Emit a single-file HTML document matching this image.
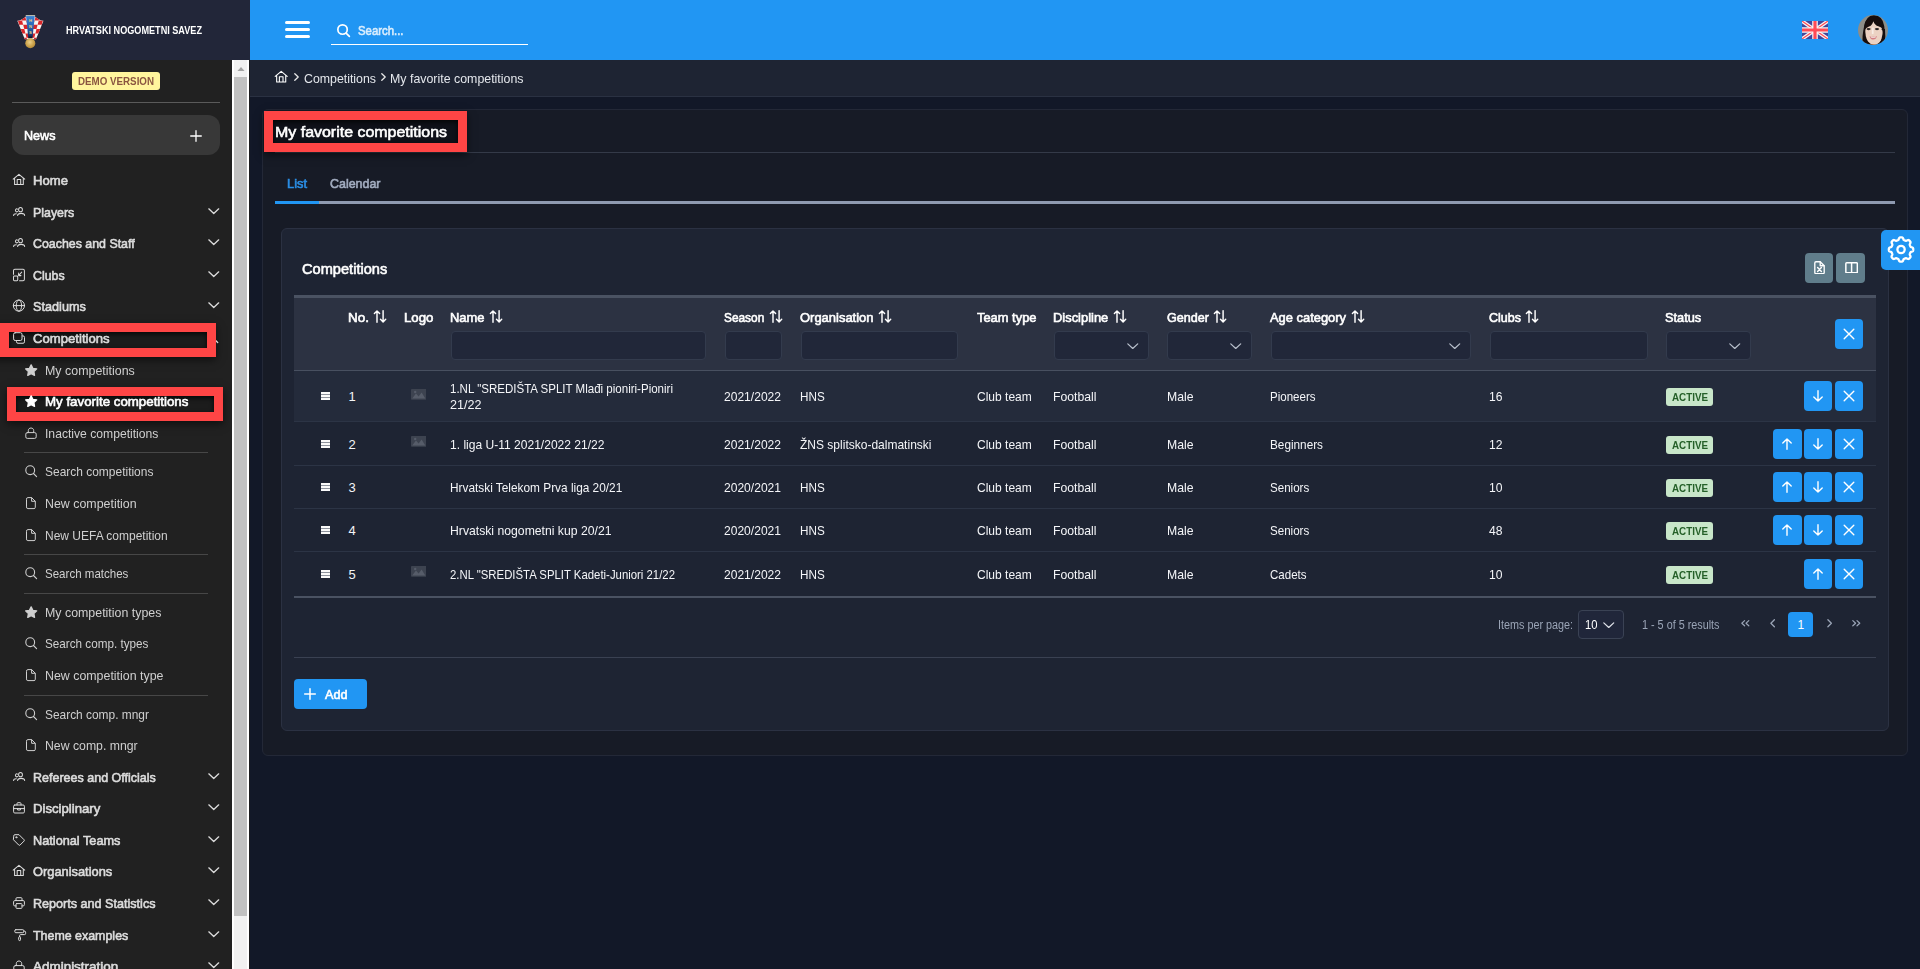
<!DOCTYPE html><html lang="en"><head><meta charset="utf-8"><title>My favorite competitions</title><style>

html,body{margin:0;padding:0;overflow:hidden;}
body{width:1920px;height:969px;overflow:hidden;background:#121828;font-family:"Liberation Sans", sans-serif;position:relative;}
body>*{position:absolute;box-sizing:border-box;}
span.t{white-space:nowrap;line-height:1;transform-origin:0 0;display:block;}

</style></head><body>
<div style="left:250px;top:0px;width:1670px;height:60px;background:#2196f3;"></div>
<div style="left:0px;top:0px;width:250px;height:60px;background:#222639;"></div>
<svg style="left:10px;top:8px;" width="42" height="46" viewBox="0 0 42 46"><defs><clipPath id="shL"><path d="M7.3 12.7 Q11.5 12.4 15.9 8.4 L16 7.3 H24.8 L24.9 8.4 Q29.3 12.4 33.5 12.7 L26 31.3 H14.8 Z"/></clipPath>
<clipPath id="hfL"><rect x="0" y="0" width="20.4" height="46"/></clipPath>
<linearGradient id="stg" x1="0" y1="0" x2="0" y2="1"><stop offset="0" stop-color="#3f86d6"/><stop offset="0.55" stop-color="#245fae"/><stop offset="0.85" stop-color="#163a73"/><stop offset="1" stop-color="#080d1c"/></linearGradient>
<radialGradient id="blg" cx="0.45" cy="0.4" r="0.6"><stop offset="0" stop-color="#ecd08a"/><stop offset="0.6" stop-color="#cfa650"/><stop offset="1" stop-color="#b58a38"/></radialGradient>
<filter id="sb" x="-10%" y="-10%" width="120%" height="120%"><feGaussianBlur stdDeviation="0.8"/></filter></defs>
<g><g clip-path="url(#shL)"><rect x="5" y="5" width="32" height="30" fill="#f7f5f3"/>
<g clip-path="url(#hfL)"><g transform="translate(-3.25,0) skewX(14.6)" fill="#d8262a"><rect x="3.75" y="8.20" width="4.15" height="4.3"/><rect x="12.05" y="8.20" width="4.15" height="4.3"/><rect x="20.35" y="8.20" width="4.15" height="4.3"/><rect x="7.90" y="12.50" width="4.15" height="4.3"/><rect x="16.20" y="12.50" width="4.15" height="4.3"/><rect x="3.75" y="16.80" width="4.15" height="4.3"/><rect x="12.05" y="16.80" width="4.15" height="4.3"/><rect x="20.35" y="16.80" width="4.15" height="4.3"/><rect x="7.90" y="21.10" width="4.15" height="4.3"/><rect x="16.20" y="21.10" width="4.15" height="4.3"/><rect x="3.75" y="25.40" width="4.15" height="4.3"/><rect x="12.05" y="25.40" width="4.15" height="4.3"/><rect x="20.35" y="25.40" width="4.15" height="4.3"/><rect x="7.90" y="29.70" width="4.15" height="4.3"/><rect x="16.20" y="29.70" width="4.15" height="4.3"/><rect x="3.75" y="34.00" width="4.15" height="4.3"/><rect x="12.05" y="34.00" width="4.15" height="4.3"/><rect x="20.35" y="34.00" width="4.15" height="4.3"/></g></g>
<g transform="translate(40.8,0) scale(-1,1)"><g clip-path="url(#hfL)"><g transform="translate(-3.25,0) skewX(14.6)" fill="#d8262a"><rect x="3.75" y="8.20" width="4.15" height="4.3"/><rect x="12.05" y="8.20" width="4.15" height="4.3"/><rect x="20.35" y="8.20" width="4.15" height="4.3"/><rect x="7.90" y="12.50" width="4.15" height="4.3"/><rect x="16.20" y="12.50" width="4.15" height="4.3"/><rect x="3.75" y="16.80" width="4.15" height="4.3"/><rect x="12.05" y="16.80" width="4.15" height="4.3"/><rect x="20.35" y="16.80" width="4.15" height="4.3"/><rect x="7.90" y="21.10" width="4.15" height="4.3"/><rect x="16.20" y="21.10" width="4.15" height="4.3"/><rect x="3.75" y="25.40" width="4.15" height="4.3"/><rect x="12.05" y="25.40" width="4.15" height="4.3"/><rect x="20.35" y="25.40" width="4.15" height="4.3"/><rect x="7.90" y="29.70" width="4.15" height="4.3"/><rect x="16.20" y="29.70" width="4.15" height="4.3"/><rect x="3.75" y="34.00" width="4.15" height="4.3"/><rect x="12.05" y="34.00" width="4.15" height="4.3"/><rect x="20.35" y="34.00" width="4.15" height="4.3"/></g></g></g></g>
<path d="M16 7.4 H24.8 L22.5 30.3 H18.3 Z" fill="url(#stg)"/>
<path d="M15.6 7.6 H25.2" stroke="#d9c9a0" stroke-width="0.7"/>
<g fill="#f0d878" font-family="Liberation Sans, sans-serif" font-weight="700" font-size="4.2" text-anchor="middle"><text x="20.4" y="13.9">H</text><text x="20.4" y="20.1">N</text><text x="20.4" y="26">S</text></g>
<circle cx="20.3" cy="35.2" r="5" fill="url(#blg)"/></g></svg>
<span class="t" id="t0" style="left:65.70px;top:25.00px;font-size:10.2px;line-height:11px;font-weight:700;color:#ffffff;transform:scaleX(0.8943);">HRVATSKI NOGOMETNI SAVEZ</span>
<div style="left:284.5px;top:21px;width:25px;height:3px;background:#ffffff;border-radius:1.5px;"></div>
<div style="left:284.5px;top:28px;width:25px;height:3px;background:#ffffff;border-radius:1.5px;"></div>
<div style="left:284.5px;top:35px;width:25px;height:3px;background:#ffffff;border-radius:1.5px;"></div>
<svg style="left:336.8px;top:24px;overflow:visible;" width="12.8" height="12.8" viewBox="0 0 12 12"><g fill="none" stroke="#ffffff" stroke-width="1.6" stroke-linecap="round" stroke-linejoin="round"><circle cx="5.2" cy="5.2" r="4.4"/><path d="M8.5 8.5 L11.6 11.6"/></g></svg>
<span class="t" id="t1" style="left:357.70px;top:23.00px;font-size:13px;line-height:15px;font-weight:400;color:#d9edfd;-webkit-text-stroke:0.6px #d9edfd;transform:scaleX(0.8745);">Search...</span>
<div style="left:331px;top:44px;width:197px;height:1px;background:#ffffff;"></div>
<svg style="left:1802px;top:21px;" width="26" height="18" viewBox="0 0 26 18"><rect width="26" height="18" fill="#41479b"/>
<path d="M0 0 L26 18 M26 0 L0 18" stroke="#f5f5f5" stroke-width="3.6"/>
<path d="M0 0 L26 18 M26 0 L0 18" stroke="#ff4b55" stroke-width="1.2"/>
<path d="M13 0 V18 M0 9 H26" stroke="#f5f5f5" stroke-width="5.6"/>
<path d="M13 0 V18 M0 9 H26" stroke="#ff4b55" stroke-width="3.2"/></svg>
<svg style="left:1858px;top:15px;" width="30" height="30" viewBox="0 0 30 30"><defs><clipPath id="av"><circle cx="15" cy="15" r="15"/></clipPath>
<filter id="ab" x="-20%" y="-20%" width="140%" height="140%"><feGaussianBlur stdDeviation="0.7"/></filter></defs>
<g clip-path="url(#av)"><rect width="30" height="30" fill="#8d8d88"/><g filter="url(#ab)">
<path d="M4.5 32 Q4 20 6 12 Q7.5 0.4 16 0.2 Q24.8 0.6 26.2 11 Q27.4 20 27 27 L23 32 Z" fill="#14100e"/>
<path d="M7.4 13 Q6.8 22 10 26.4 Q13 30 16 30 Q20 29.8 22.8 25.4 Q25.2 20 24.6 12.5 Q21 6 16 6 Q10 6 7.4 13 Z" fill="#ecd2c3"/>
<path d="M6.4 15.5 Q8 12.4 11 11.6 Q14 10.6 15.4 6.2 Q16.8 10.4 20.4 11.2 Q23.4 11.8 25.2 15.4 Q26.4 6 20 3 Q12 1 8 6 Q5.6 10 6.4 15.5 Z" fill="#14100e"/>
<path d="M23 14 Q25.4 15 25 20 Q24.6 24 22.4 27.4 L26 29 Q28 22 27 14 Z" fill="#16110f"/>
<ellipse cx="10.6" cy="14.1" rx="2.1" ry="1.1" fill="#2e2826"/><ellipse cx="19" cy="14.1" rx="2.1" ry="1.1" fill="#2e2826"/>
<path d="M15 12.6 Q14.4 17 14.8 19" stroke="#f8ece4" stroke-width="1.8" fill="none"/>
<path d="M11.6 21.2 Q15.3 22.6 18.9 21 Q18.2 24.6 15.2 24.6 Q12.4 24.6 11.6 21.2 Z" fill="#d47f84"/>
<path d="M12.6 21.6 Q15.3 22.4 18 21.5 L17.6 22.5 Q15.3 23.1 12.9 22.6 Z" fill="#f6ebe7"/>
<path d="M9 29.8 Q16 28.6 23 29.8 L23 32 H9 Z" fill="#c07646"/>
</g></g></svg>
<div style="left:0px;top:60px;width:232px;height:909px;background:#212121;"></div>
<div style="left:232px;top:60px;width:17px;height:909px;background:#f1f1f1;border-left:2px solid #fff;border-right:2px solid #fff;"></div>
<div style="left:249px;top:60px;width:1px;height:909px;background:#1b1b1d;"></div>
<svg style="left:236.5px;top:66.5px;" width="8" height="4.5" viewBox="0 0 8 4.5"><path d="M0 4.5 L4 0 L8 4.5 Z" fill="#a3a3a3"/></svg>
<div style="left:234px;top:77px;width:13px;height:838.5px;background:#c1c1c1;"></div>
<div style="left:72px;top:72px;width:88px;height:18px;background:#fff59d;border-radius:3px;"></div>
<span class="t" id="t2" style="left:78.20px;top:76.00px;font-size:10.2px;line-height:11px;font-weight:700;color:#8a5540;transform:scaleX(0.9590);">DEMO VERSION</span>
<div style="left:12px;top:102px;width:208px;height:1px;background:#5a5a5a;"></div>
<div style="left:12px;top:115px;width:208px;height:40px;background:#383838;border-radius:12px;"></div>
<span class="t" id="t3" style="left:24.20px;top:128.00px;font-size:13px;line-height:15px;font-weight:400;color:#ffffff;-webkit-text-stroke:0.6px #ffffff;transform:scaleX(0.9688);">News</span>
<svg style="left:190px;top:130px;overflow:visible;" width="12" height="12" viewBox="0 0 12 12"><path fill="none" stroke="#ffffff" stroke-width="1.3" stroke-linecap="round" stroke-linejoin="round" d="M6 0.7 V11.3 M0.7 6 H11.3"/></svg>
<svg style="left:13px;top:174px;overflow:visible;" width="12" height="12" viewBox="0 0 12 12"><path fill="none" stroke="#dcdcdc" stroke-width="1.05" stroke-linecap="round" stroke-linejoin="round" d="M0.2 5.2 L5.95 0.3 L11.7 5.2 M1.6 4.2 V10.5 H10.3 V4.2 M4.2 10.5 V5.5 H7.7 V10.5"/></svg>
<span class="t" id="t4" style="left:33.45px;top:173.00px;font-size:13px;line-height:15px;font-weight:400;color:#dcdcdc;-webkit-text-stroke:0.6px #dcdcdc;transform:scaleX(1.0090);">Home</span>
<svg style="left:13px;top:206px;overflow:visible;" width="12" height="12" viewBox="0 0 12 12"><g fill="none" stroke="#dcdcdc" stroke-width="1.1" stroke-linecap="round" stroke-linejoin="round" transform="translate(0.7,0.2) scale(0.89,0.97)"><circle cx="7.65" cy="3.55" r="2.15"/><path d="M4.4 9.5 C4.4 7.8 5.4 7.4 8.3 7.4 C11.2 7.4 12.3 7.8 12.3 9.5"/><path d="M4.3 3 A1.5 1.5 0 1 0 4.3 5.5"/><path d="M-0.1 9.5 C-0.1 8.1 0.8 7.7 2.9 7.7"/></g></svg>
<span class="t" id="t5" style="left:33.45px;top:205.00px;font-size:13px;line-height:15px;font-weight:400;color:#dcdcdc;-webkit-text-stroke:0.6px #dcdcdc;transform:scaleX(0.9514);">Players</span>
<svg style="left:207.5px;top:208.4px;overflow:visible;" width="11.5" height="6.3" viewBox="0 0 12 6.6"><path fill="none" stroke="#dcdcdc" stroke-width="1.4" stroke-linecap="round" stroke-linejoin="round" d="M0.8 0.9 L6 5.7 L11.2 0.9"/></svg>
<svg style="left:13px;top:237px;overflow:visible;" width="12" height="12" viewBox="0 0 12 12"><g fill="none" stroke="#dcdcdc" stroke-width="1.1" stroke-linecap="round" stroke-linejoin="round" transform="translate(0.7,0.2) scale(0.89,0.97)"><circle cx="7.65" cy="3.55" r="2.15"/><path d="M4.4 9.5 C4.4 7.8 5.4 7.4 8.3 7.4 C11.2 7.4 12.3 7.8 12.3 9.5"/><path d="M4.3 3 A1.5 1.5 0 1 0 4.3 5.5"/><path d="M-0.1 9.5 C-0.1 8.1 0.8 7.7 2.9 7.7"/></g></svg>
<span class="t" id="t6" style="left:33.45px;top:236.00px;font-size:13px;line-height:15px;font-weight:400;color:#dcdcdc;-webkit-text-stroke:0.6px #dcdcdc;transform:scaleX(0.9524);">Coaches and Staff</span>
<svg style="left:207.5px;top:239.4px;overflow:visible;" width="11.5" height="6.3" viewBox="0 0 12 6.6"><path fill="none" stroke="#dcdcdc" stroke-width="1.4" stroke-linecap="round" stroke-linejoin="round" d="M0.8 0.9 L6 5.7 L11.2 0.9"/></svg>
<svg style="left:13px;top:269px;overflow:visible;" width="12" height="12" viewBox="0 0 12 12"><g fill="none" stroke="#dcdcdc" stroke-width="1.1" stroke-linecap="round" stroke-linejoin="round" transform="translate(0.6,0) scale(0.9,1)"><path d="M-0.1 5.2 V1.7 Q-0.1 0.2 1.4 0.2 H10.5 Q12 0.2 12 1.7 V10.2 Q12 11.7 10.5 11.7 H6.6"/><rect x="-0.1" y="7" width="4.7" height="4.7" rx="0.9"/><path d="M9 3.2 L5.6 6.6 M5.6 4 V6.6 H8.2"/></g></svg>
<span class="t" id="t7" style="left:33.45px;top:268.00px;font-size:13px;line-height:15px;font-weight:400;color:#dcdcdc;-webkit-text-stroke:0.6px #dcdcdc;transform:scaleX(0.9519);">Clubs</span>
<svg style="left:207.5px;top:271.4px;overflow:visible;" width="11.5" height="6.3" viewBox="0 0 12 6.6"><path fill="none" stroke="#dcdcdc" stroke-width="1.4" stroke-linecap="round" stroke-linejoin="round" d="M0.8 0.9 L6 5.7 L11.2 0.9"/></svg>
<svg style="left:13px;top:300px;overflow:visible;" width="12" height="12" viewBox="0 0 12 12"><g fill="none" stroke="#dcdcdc" stroke-width="1.0" stroke-linecap="round" stroke-linejoin="round"><circle cx="5.95" cy="5.6" r="5.6"/><path d="M0.35 5.6 H11.55"/><ellipse cx="5.95" cy="5.6" rx="2.7" ry="5.6"/></g></svg>
<span class="t" id="t8" style="left:33.45px;top:299.00px;font-size:13px;line-height:15px;font-weight:400;color:#dcdcdc;-webkit-text-stroke:0.6px #dcdcdc;transform:scaleX(0.9750);">Stadiums</span>
<svg style="left:207.5px;top:302.4px;overflow:visible;" width="11.5" height="6.3" viewBox="0 0 12 6.6"><path fill="none" stroke="#dcdcdc" stroke-width="1.4" stroke-linecap="round" stroke-linejoin="round" d="M0.8 0.9 L6 5.7 L11.2 0.9"/></svg>
<div style="left:-9px;top:323px;width:225px;height:34px;background:#ff4545;box-shadow:0 3px 8px rgba(0,0,0,0.55);"></div>
<div style="left:9px;top:332px;width:198px;height:16px;background:#1c1c1c;box-shadow:inset 0 2px 5px rgba(0,0,0,0.8);"></div>
<svg style="left:206.8px;top:337.2px;overflow:visible;" width="11.5" height="6.3" viewBox="0 0 12 6.6"><path fill="none" stroke="#dcdcdc" stroke-width="1.4" stroke-linecap="round" stroke-linejoin="round" d="M0.8 5.7 L6 0.9 L11.2 5.7"/></svg>
<div style="left:207px;top:323px;width:9px;height:34px;background:#ff4545;"></div>
<svg style="left:13px;top:332px;overflow:visible;" width="12" height="12" viewBox="0 0 12 12"><g fill="none" stroke="#dcdcdc" stroke-width="1.0" stroke-linecap="round" stroke-linejoin="round"><rect x="0.6" y="0.7" width="8.4" height="7.8" rx="1.6"/><path d="M9.6 3.9 H10 Q11.5 3.9 11.5 5.4 V9.75 Q11.5 11.25 10 11.25 H5 Q3.5 11.25 3.5 9.75 V9.1"/></g></svg>
<span class="t" id="t9" style="left:33.45px;top:331.00px;font-size:13px;line-height:15px;font-weight:400;color:#dcdcdc;-webkit-text-stroke:0.6px #dcdcdc;transform:scaleX(1.0102);">Competitions</span>
<svg style="left:25px;top:364px;overflow:visible;" width="12" height="12" viewBox="0 0 12 12"><path fill="#cfcfcf" stroke="#cfcfcf" stroke-width="1.3" stroke-linejoin="round" d="M6.15 0.9 L7.85 4.35 L11.7 4.9 L8.9 7.6 L9.55 11.4 L6.15 9.6 L2.75 11.4 L3.4 7.6 L0.6 4.9 L4.45 4.35 Z"/></svg>
<span class="t" id="t10" style="left:45.30px;top:363.00px;font-size:13px;line-height:15px;font-weight:400;color:#cfcfcf;transform:scaleX(0.9561);">My competitions</span>
<div style="left:7px;top:387px;width:216px;height:34px;background:#ff4545;box-shadow:0 3px 8px rgba(0,0,0,0.55);"></div>
<div style="left:16px;top:396px;width:198px;height:16px;background:#1c1c1c;box-shadow:inset 0 2px 5px rgba(0,0,0,0.8);"></div>
<svg style="left:25px;top:395px;overflow:visible;" width="12" height="12" viewBox="0 0 12 12"><path fill="#ffffff" stroke="#ffffff" stroke-width="1.3" stroke-linejoin="round" d="M6.15 0.9 L7.85 4.35 L11.7 4.9 L8.9 7.6 L9.55 11.4 L6.15 9.6 L2.75 11.4 L3.4 7.6 L0.6 4.9 L4.45 4.35 Z"/></svg>
<span class="t" id="t11" style="left:45.30px;top:394.00px;font-size:13px;line-height:15px;font-weight:400;color:#ffffff;-webkit-text-stroke:0.6px #ffffff;transform:scaleX(1.0230);">My favorite competitions</span>
<svg style="left:25px;top:427px;overflow:visible;" width="12" height="12" viewBox="0 0 12 12"><g fill="none" stroke="#cfcfcf" stroke-width="1.0" stroke-linecap="round" stroke-linejoin="round"><rect x="0.8" y="5.6" width="10.4" height="5.8" rx="1.5"/><path d="M3.3 5.6 V3.5 C3.3 0.2 8.7 0.2 8.7 3.5 V5.6"/></g></svg>
<span class="t" id="t12" style="left:45.30px;top:426.00px;font-size:13px;line-height:15px;font-weight:400;color:#cfcfcf;transform:scaleX(0.9341);">Inactive competitions</span>
<div style="left:24px;top:452px;width:184px;height:1px;background:#474747;"></div>
<svg style="left:25px;top:465px;overflow:visible;" width="12" height="12" viewBox="0 0 12 12"><g fill="none" stroke="#cfcfcf" stroke-width="1.1" stroke-linecap="round" stroke-linejoin="round"><circle cx="5.2" cy="5.2" r="4.4"/><path d="M8.5 8.5 L11.6 11.6"/></g></svg>
<span class="t" id="t13" style="left:45.30px;top:464.00px;font-size:13px;line-height:15px;font-weight:400;color:#cfcfcf;transform:scaleX(0.9204);">Search competitions</span>
<svg style="left:25px;top:497px;overflow:visible;" width="12" height="12" viewBox="0 0 12 12"><g fill="none" stroke="#cfcfcf" stroke-width="1.0" stroke-linecap="round" stroke-linejoin="round"><path d="M1.5 1.9 Q1.5 0.6 2.8 0.6 H6.6 L10.3 4.3 V10.3 Q10.3 11.6 9 11.6 H2.8 Q1.5 11.6 1.5 10.3 Z"/><path d="M6.6 0.8 V4.3 H10.1"/></g></svg>
<span class="t" id="t14" style="left:45.30px;top:496.00px;font-size:13px;line-height:15px;font-weight:400;color:#cfcfcf;transform:scaleX(0.9536);">New competition</span>
<svg style="left:25px;top:529px;overflow:visible;" width="12" height="12" viewBox="0 0 12 12"><g fill="none" stroke="#cfcfcf" stroke-width="1.0" stroke-linecap="round" stroke-linejoin="round"><path d="M1.5 1.9 Q1.5 0.6 2.8 0.6 H6.6 L10.3 4.3 V10.3 Q10.3 11.6 9 11.6 H2.8 Q1.5 11.6 1.5 10.3 Z"/><path d="M6.6 0.8 V4.3 H10.1"/></g></svg>
<span class="t" id="t15" style="left:45.30px;top:528.00px;font-size:13px;line-height:15px;font-weight:400;color:#cfcfcf;transform:scaleX(0.9225);">New UEFA competition</span>
<div style="left:24px;top:554px;width:184px;height:1px;background:#474747;"></div>
<svg style="left:25px;top:567px;overflow:visible;" width="12" height="12" viewBox="0 0 12 12"><g fill="none" stroke="#cfcfcf" stroke-width="1.1" stroke-linecap="round" stroke-linejoin="round"><circle cx="5.2" cy="5.2" r="4.4"/><path d="M8.5 8.5 L11.6 11.6"/></g></svg>
<span class="t" id="t16" style="left:45.30px;top:566.00px;font-size:13px;line-height:15px;font-weight:400;color:#cfcfcf;transform:scaleX(0.8878);">Search matches</span>
<div style="left:24px;top:593px;width:184px;height:1px;background:#474747;"></div>
<svg style="left:25px;top:606px;overflow:visible;" width="12" height="12" viewBox="0 0 12 12"><path fill="#cfcfcf" stroke="#cfcfcf" stroke-width="1.3" stroke-linejoin="round" d="M6.15 0.9 L7.85 4.35 L11.7 4.9 L8.9 7.6 L9.55 11.4 L6.15 9.6 L2.75 11.4 L3.4 7.6 L0.6 4.9 L4.45 4.35 Z"/></svg>
<span class="t" id="t17" style="left:45.30px;top:605.00px;font-size:13px;line-height:15px;font-weight:400;color:#cfcfcf;transform:scaleX(0.9532);">My competition types</span>
<svg style="left:25px;top:637px;overflow:visible;" width="12" height="12" viewBox="0 0 12 12"><g fill="none" stroke="#cfcfcf" stroke-width="1.1" stroke-linecap="round" stroke-linejoin="round"><circle cx="5.2" cy="5.2" r="4.4"/><path d="M8.5 8.5 L11.6 11.6"/></g></svg>
<span class="t" id="t18" style="left:45.30px;top:636.00px;font-size:13px;line-height:15px;font-weight:400;color:#cfcfcf;transform:scaleX(0.9000);">Search comp. types</span>
<svg style="left:25px;top:669px;overflow:visible;" width="12" height="12" viewBox="0 0 12 12"><g fill="none" stroke="#cfcfcf" stroke-width="1.0" stroke-linecap="round" stroke-linejoin="round"><path d="M1.5 1.9 Q1.5 0.6 2.8 0.6 H6.6 L10.3 4.3 V10.3 Q10.3 11.6 9 11.6 H2.8 Q1.5 11.6 1.5 10.3 Z"/><path d="M6.6 0.8 V4.3 H10.1"/></g></svg>
<span class="t" id="t19" style="left:45.30px;top:668.00px;font-size:13px;line-height:15px;font-weight:400;color:#cfcfcf;transform:scaleX(0.9527);">New competition type</span>
<div style="left:24px;top:695px;width:184px;height:1px;background:#474747;"></div>
<svg style="left:25px;top:708px;overflow:visible;" width="12" height="12" viewBox="0 0 12 12"><g fill="none" stroke="#cfcfcf" stroke-width="1.1" stroke-linecap="round" stroke-linejoin="round"><circle cx="5.2" cy="5.2" r="4.4"/><path d="M8.5 8.5 L11.6 11.6"/></g></svg>
<span class="t" id="t20" style="left:45.30px;top:707.00px;font-size:13px;line-height:15px;font-weight:400;color:#cfcfcf;transform:scaleX(0.9159);">Search comp. mngr</span>
<svg style="left:25px;top:739px;overflow:visible;" width="12" height="12" viewBox="0 0 12 12"><g fill="none" stroke="#cfcfcf" stroke-width="1.0" stroke-linecap="round" stroke-linejoin="round"><path d="M1.5 1.9 Q1.5 0.6 2.8 0.6 H6.6 L10.3 4.3 V10.3 Q10.3 11.6 9 11.6 H2.8 Q1.5 11.6 1.5 10.3 Z"/><path d="M6.6 0.8 V4.3 H10.1"/></g></svg>
<span class="t" id="t21" style="left:45.30px;top:738.00px;font-size:13px;line-height:15px;font-weight:400;color:#cfcfcf;transform:scaleX(0.9430);">New comp. mngr</span>
<svg style="left:13px;top:771px;overflow:visible;" width="12" height="12" viewBox="0 0 12 12"><g fill="none" stroke="#dcdcdc" stroke-width="1.1" stroke-linecap="round" stroke-linejoin="round" transform="translate(0.7,0.2) scale(0.89,0.97)"><circle cx="7.65" cy="3.55" r="2.15"/><path d="M4.4 9.5 C4.4 7.8 5.4 7.4 8.3 7.4 C11.2 7.4 12.3 7.8 12.3 9.5"/><path d="M4.3 3 A1.5 1.5 0 1 0 4.3 5.5"/><path d="M-0.1 9.5 C-0.1 8.1 0.8 7.7 2.9 7.7"/></g></svg>
<span class="t" id="t22" style="left:33.45px;top:770.00px;font-size:13px;line-height:15px;font-weight:400;color:#dcdcdc;-webkit-text-stroke:0.6px #dcdcdc;transform:scaleX(0.9622);">Referees and Officials</span>
<svg style="left:207.5px;top:773.4px;overflow:visible;" width="11.5" height="6.3" viewBox="0 0 12 6.6"><path fill="none" stroke="#dcdcdc" stroke-width="1.4" stroke-linecap="round" stroke-linejoin="round" d="M0.8 0.9 L6 5.7 L11.2 0.9"/></svg>
<svg style="left:13px;top:802px;overflow:visible;" width="12" height="12" viewBox="0 0 12 12"><g fill="none" stroke="#dcdcdc" stroke-width="1.0" stroke-linecap="round" stroke-linejoin="round"><rect x="0.6" y="3" width="10.8" height="8" rx="1.2"/><path d="M4 3 V1.6 Q4 0.7 4.9 0.7 H7.1 Q8 0.7 8 1.6 V3 M0.6 6.6 H11.4 M4.6 6.6 V8 H7.4 V6.6"/></g></svg>
<span class="t" id="t23" style="left:33.45px;top:801.00px;font-size:13px;line-height:15px;font-weight:400;color:#dcdcdc;-webkit-text-stroke:0.6px #dcdcdc;transform:scaleX(1.0118);">Disciplinary</span>
<svg style="left:207.5px;top:804.4px;overflow:visible;" width="11.5" height="6.3" viewBox="0 0 12 6.6"><path fill="none" stroke="#dcdcdc" stroke-width="1.4" stroke-linecap="round" stroke-linejoin="round" d="M0.8 0.9 L6 5.7 L11.2 0.9"/></svg>
<svg style="left:13px;top:834px;overflow:visible;" width="12" height="12" viewBox="0 0 12 12"><g fill="none" stroke="#dcdcdc" stroke-width="1.0" stroke-linecap="round" stroke-linejoin="round"><path d="M0.7 1.8 Q0.7 0.7 1.8 0.7 H6 L11 5.7 Q11.7 6.4 11 7.1 L7.1 11 Q6.4 11.7 5.7 11 L0.7 6 Z"/><circle cx="3.3" cy="3.3" r="0.6"/></g></svg>
<span class="t" id="t24" style="left:33.45px;top:833.00px;font-size:13px;line-height:15px;font-weight:400;color:#dcdcdc;-webkit-text-stroke:0.6px #dcdcdc;transform:scaleX(0.9790);">National Teams</span>
<svg style="left:207.5px;top:836.4px;overflow:visible;" width="11.5" height="6.3" viewBox="0 0 12 6.6"><path fill="none" stroke="#dcdcdc" stroke-width="1.4" stroke-linecap="round" stroke-linejoin="round" d="M0.8 0.9 L6 5.7 L11.2 0.9"/></svg>
<svg style="left:13px;top:865px;overflow:visible;" width="12" height="12" viewBox="0 0 12 12"><path fill="none" stroke="#dcdcdc" stroke-width="1.05" stroke-linecap="round" stroke-linejoin="round" d="M0.2 5.2 L5.95 0.3 L11.7 5.2 M1.6 4.2 V10.5 H10.3 V4.2 M4.2 10.5 V5.5 H7.7 V10.5"/></svg>
<span class="t" id="t25" style="left:33.45px;top:864.00px;font-size:13px;line-height:15px;font-weight:400;color:#dcdcdc;-webkit-text-stroke:0.6px #dcdcdc;transform:scaleX(0.9879);">Organisations</span>
<svg style="left:207.5px;top:867.4px;overflow:visible;" width="11.5" height="6.3" viewBox="0 0 12 6.6"><path fill="none" stroke="#dcdcdc" stroke-width="1.4" stroke-linecap="round" stroke-linejoin="round" d="M0.8 0.9 L6 5.7 L11.2 0.9"/></svg>
<svg style="left:13px;top:897px;overflow:visible;" width="12" height="12" viewBox="0 0 12 12"><g fill="none" stroke="#dcdcdc" stroke-width="1.0" stroke-linecap="round" stroke-linejoin="round"><path d="M3 3.6 V1.6 Q3 0.7 3.9 0.7 H8.1 Q9 0.7 9 1.6 V3.6"/><path d="M3 8.9 H1.8 Q0.6 8.9 0.6 7.7 V4.8 Q0.6 3.6 1.8 3.6 H10.2 Q11.4 3.6 11.4 4.8 V7.7 Q11.4 8.9 10.2 8.9 H9"/><rect x="3" y="6.6" width="6" height="4.8" rx="0.8"/></g></svg>
<span class="t" id="t26" style="left:33.45px;top:896.00px;font-size:13px;line-height:15px;font-weight:400;color:#dcdcdc;-webkit-text-stroke:0.6px #dcdcdc;transform:scaleX(0.9687);">Reports and Statistics</span>
<svg style="left:207.5px;top:899.4px;overflow:visible;" width="11.5" height="6.3" viewBox="0 0 12 6.6"><path fill="none" stroke="#dcdcdc" stroke-width="1.4" stroke-linecap="round" stroke-linejoin="round" d="M0.8 0.9 L6 5.7 L11.2 0.9"/></svg>
<svg style="left:14px;top:929px;overflow:visible;" width="12" height="12" viewBox="0 0 12 12"><g fill="none" stroke="#dcdcdc" stroke-width="1.0" stroke-linecap="round" stroke-linejoin="round"><rect x="0.8" y="0.7" width="9" height="3" rx="1"/><path d="M9.8 2.2 H10.6 Q11.6 2.2 11.6 3.2 V4.6 Q11.6 5.6 10.6 5.6 H6.6 Q5.6 5.6 5.6 6.6 V7.6"/><rect x="4.7" y="7.6" width="1.8" height="4" rx="0.9"/></g></svg>
<span class="t" id="t27" style="left:33.45px;top:928.00px;font-size:13px;line-height:15px;font-weight:400;color:#dcdcdc;-webkit-text-stroke:0.6px #dcdcdc;transform:scaleX(0.9552);">Theme examples</span>
<svg style="left:207.5px;top:931.4px;overflow:visible;" width="11.5" height="6.3" viewBox="0 0 12 6.6"><path fill="none" stroke="#dcdcdc" stroke-width="1.4" stroke-linecap="round" stroke-linejoin="round" d="M0.8 0.9 L6 5.7 L11.2 0.9"/></svg>
<svg style="left:13px;top:960px;overflow:visible;" width="12" height="12" viewBox="0 0 12 12"><g fill="none" stroke="#dcdcdc" stroke-width="1.0" stroke-linecap="round" stroke-linejoin="round"><rect x="0.8" y="5.6" width="10.4" height="5.8" rx="1.5"/><path d="M3.3 5.6 V3.5 C3.3 0.2 8.7 0.2 8.7 3.5 V5.6"/></g></svg>
<span class="t" id="t28" style="left:33.45px;top:959.00px;font-size:13px;line-height:15px;font-weight:400;color:#dcdcdc;-webkit-text-stroke:0.6px #dcdcdc;transform:scaleX(1.0349);">Administration</span>
<svg style="left:207.5px;top:962.4px;overflow:visible;" width="11.5" height="6.3" viewBox="0 0 12 6.6"><path fill="none" stroke="#dcdcdc" stroke-width="1.4" stroke-linecap="round" stroke-linejoin="round" d="M0.8 0.9 L6 5.7 L11.2 0.9"/></svg>
<div style="left:250px;top:60px;width:1670px;height:36px;background:#1e2433;"></div>
<div style="left:250px;top:96px;width:1670px;height:1px;background:#2a3142;"></div>
<svg style="left:274.9px;top:71px;overflow:visible;" width="12.5" height="12.5" viewBox="0 0 12 12"><path fill="none" stroke="#ffffff" stroke-width="1.05" stroke-linecap="round" stroke-linejoin="round" d="M0.2 5.2 L5.95 0.3 L11.7 5.2 M1.6 4.2 V10.5 H10.3 V4.2 M4.2 10.5 V5.5 H7.7 V10.5"/></svg>
<svg style="left:294px;top:73px;" width="5" height="8" viewBox="0 0 5 8"><path fill="none" stroke="#e8e8e8" stroke-width="1.3" stroke-linecap="round" stroke-linejoin="round" d="M0.8 0.8 L4.2 4 L0.8 7.2"/></svg>
<span class="t" id="t29" style="left:303.70px;top:71.00px;font-size:13px;line-height:15px;font-weight:400;color:#e4e7ec;transform:scaleX(0.9489);">Competitions</span>
<svg style="left:380.5px;top:73px;" width="5" height="8" viewBox="0 0 5 8"><path fill="none" stroke="#e8e8e8" stroke-width="1.3" stroke-linecap="round" stroke-linejoin="round" d="M0.8 0.8 L4.2 4 L0.8 7.2"/></svg>
<span class="t" id="t30" style="left:390.20px;top:71.00px;font-size:13px;line-height:15px;font-weight:400;color:#e4e7ec;transform:scaleX(0.9524);">My favorite competitions</span>
<div style="left:262px;top:109px;width:1646px;height:647px;background:#171b26;border:1px solid #232837;border-radius:6px;"></div>
<div style="left:275px;top:152px;width:1620px;height:1px;background:#343a48;"></div>
<div style="left:264px;top:111px;width:203px;height:41px;background:#ff4545;box-shadow:0 3px 8px rgba(0,0,0,0.55);"></div>
<div style="left:273px;top:120px;width:185px;height:23px;background:#0f1119;box-shadow:inset 0 2px 5px rgba(0,0,0,0.8);"></div>
<span class="t" id="t31" style="left:275.20px;top:123.00px;font-size:15.5px;line-height:17px;font-weight:400;color:#ffffff;-webkit-text-stroke:0.6px #ffffff;transform:scaleX(1.0292);">My favorite competitions</span>
<span class="t" id="t32" style="left:286.70px;top:176.00px;font-size:13px;line-height:15px;font-weight:400;color:#2b8fe6;-webkit-text-stroke:0.6px #2b8fe6;transform:scaleX(0.9884);">List</span>
<span class="t" id="t33" style="left:330.20px;top:176.00px;font-size:13px;line-height:15px;font-weight:400;color:#a3adc0;-webkit-text-stroke:0.6px #a3adc0;transform:scaleX(0.9571);">Calendar</span>
<div style="left:275px;top:201px;width:1620px;height:3px;background:#8f9ab0;"></div>
<div style="left:275px;top:201px;width:44px;height:3px;background:#2196f3;"></div>
<div style="left:281px;top:228px;width:1608px;height:503px;background:#1e2433;border:1px solid #2b3142;border-radius:6px;"></div>
<span class="t" id="t34" style="left:302.20px;top:260.00px;font-size:15px;line-height:17px;font-weight:400;color:#ffffff;-webkit-text-stroke:0.6px #ffffff;transform:scaleX(0.9738);">Competitions</span>
<div style="left:1805px;top:253px;width:28px;height:30px;background:#607d8b;border-radius:4px;"></div>
<div style="left:1836px;top:253px;width:29px;height:30px;background:#607d8b;border-radius:4px;"></div>
<svg style="left:1814px;top:261px;" width="11" height="13.4" viewBox="0 0 11 13.4"><g fill="none" stroke="#fff" stroke-width="1.35" stroke-linecap="round" stroke-linejoin="round"><path d="M0.8 2 Q0.8 0.8 2 0.8 H6.2 L10.2 4.8 V11.4 Q10.2 12.6 9 12.6 H2 Q0.8 12.6 0.8 11.4 Z"/><path d="M6.2 1 V4.8 H10"/><path d="M3.6 6.5 L7.4 10.5 M7.4 6.5 L3.6 10.5" stroke-width="1.45"/></g></svg>
<svg style="left:1845px;top:261.6px;" width="13.2" height="11.8" viewBox="0 0 13.2 11.8"><g fill="none" stroke="#fff" stroke-width="1.5" stroke-linecap="round" stroke-linejoin="round"><rect x="0.85" y="0.85" width="11.5" height="10" rx="0.8"/><path d="M6.6 0.85 V10.85"/></g></svg>
<div style="left:1881px;top:230px;width:39px;height:40px;background:#2196f3;border-radius:5px 0 0 5px;"></div>
<svg style="left:1887px;top:236px;overflow:visible;" width="28" height="28" viewBox="0 0 28 28"><g fill="none" stroke="#fff" stroke-width="2.3" stroke-linejoin="round"><path d="M14.05 1.30 L14.37 1.31 L14.69 1.33 L15.00 1.39 L15.31 1.48 L15.61 1.65 L15.88 1.96 L16.10 2.43 L16.28 2.99 L16.46 3.47 L16.65 3.79 L16.87 3.99 L17.09 4.13 L17.33 4.25 L17.56 4.35 L17.80 4.45 L18.04 4.54 L18.28 4.64 L18.52 4.72 L18.78 4.79 L19.08 4.79 L19.44 4.70 L19.90 4.49 L20.43 4.22 L20.92 4.05 L21.32 4.02 L21.66 4.11 L21.94 4.26 L22.20 4.45 L22.45 4.65 L22.68 4.87 L22.90 5.10 L23.10 5.35 L23.29 5.61 L23.44 5.89 L23.53 6.23 L23.50 6.63 L23.33 7.12 L23.06 7.65 L22.85 8.11 L22.76 8.47 L22.76 8.77 L22.83 9.03 L22.91 9.27 L23.01 9.51 L23.10 9.75 L23.20 9.99 L23.30 10.22 L23.42 10.46 L23.56 10.68 L23.76 10.90 L24.08 11.09 L24.56 11.27 L25.12 11.45 L25.59 11.67 L25.90 11.94 L26.07 12.24 L26.16 12.55 L26.22 12.86 L26.24 13.18 L26.25 13.50 L26.24 13.82 L26.22 14.14 L26.16 14.45 L26.07 14.76 L25.90 15.06 L25.59 15.33 L25.12 15.55 L24.56 15.73 L24.08 15.91 L23.76 16.10 L23.56 16.32 L23.42 16.54 L23.30 16.78 L23.20 17.01 L23.10 17.25 L23.01 17.49 L22.91 17.73 L22.83 17.97 L22.76 18.23 L22.76 18.53 L22.85 18.89 L23.06 19.35 L23.33 19.88 L23.50 20.37 L23.53 20.77 L23.44 21.11 L23.29 21.39 L23.10 21.65 L22.90 21.90 L22.68 22.13 L22.45 22.35 L22.20 22.55 L21.94 22.74 L21.66 22.89 L21.32 22.98 L20.92 22.95 L20.43 22.78 L19.90 22.51 L19.44 22.30 L19.08 22.21 L18.78 22.21 L18.52 22.28 L18.28 22.36 L18.04 22.46 L17.80 22.55 L17.56 22.65 L17.33 22.75 L17.09 22.87 L16.87 23.01 L16.65 23.21 L16.46 23.53 L16.28 24.01 L16.10 24.57 L15.88 25.04 L15.61 25.35 L15.31 25.52 L15.00 25.61 L14.69 25.67 L14.37 25.69 L14.05 25.70 L13.73 25.69 L13.41 25.67 L13.10 25.61 L12.79 25.52 L12.49 25.35 L12.22 25.04 L12.00 24.57 L11.82 24.01 L11.64 23.53 L11.45 23.21 L11.23 23.01 L11.01 22.87 L10.77 22.75 L10.54 22.65 L10.30 22.55 L10.06 22.46 L9.82 22.36 L9.58 22.28 L9.32 22.21 L9.02 22.21 L8.66 22.30 L8.20 22.51 L7.67 22.78 L7.18 22.95 L6.78 22.98 L6.44 22.89 L6.16 22.74 L5.90 22.55 L5.65 22.35 L5.42 22.13 L5.20 21.90 L5.00 21.65 L4.81 21.39 L4.66 21.11 L4.57 20.77 L4.60 20.37 L4.77 19.88 L5.04 19.35 L5.25 18.89 L5.34 18.53 L5.34 18.23 L5.27 17.97 L5.19 17.73 L5.09 17.49 L5.00 17.25 L4.90 17.01 L4.80 16.78 L4.68 16.54 L4.54 16.32 L4.34 16.10 L4.02 15.91 L3.54 15.73 L2.98 15.55 L2.51 15.33 L2.20 15.06 L2.03 14.76 L1.94 14.45 L1.88 14.14 L1.86 13.82 L1.85 13.50 L1.86 13.18 L1.88 12.86 L1.94 12.55 L2.03 12.24 L2.20 11.94 L2.51 11.67 L2.98 11.45 L3.54 11.27 L4.02 11.09 L4.34 10.90 L4.54 10.68 L4.68 10.46 L4.80 10.22 L4.90 9.99 L5.00 9.75 L5.09 9.51 L5.19 9.27 L5.27 9.03 L5.34 8.77 L5.34 8.47 L5.25 8.11 L5.04 7.65 L4.77 7.12 L4.60 6.63 L4.57 6.23 L4.66 5.89 L4.81 5.61 L5.00 5.35 L5.20 5.10 L5.42 4.87 L5.65 4.65 L5.90 4.45 L6.16 4.26 L6.44 4.11 L6.78 4.02 L7.18 4.05 L7.67 4.22 L8.20 4.49 L8.66 4.70 L9.02 4.79 L9.32 4.79 L9.58 4.72 L9.82 4.64 L10.06 4.54 L10.30 4.45 L10.54 4.35 L10.77 4.25 L11.01 4.13 L11.23 3.99 L11.45 3.79 L11.64 3.47 L11.82 2.99 L12.00 2.43 L12.22 1.96 L12.49 1.65 L12.79 1.48 L13.10 1.39 L13.41 1.33 L13.73 1.31 Z"/><circle cx="14.05" cy="13.5" r="3.65"/></g></svg>
<div style="left:294px;top:295px;width:1582px;height:3px;background:#4a5262;"></div>
<div style="left:294px;top:298px;width:1582px;height:72px;background:#2c3242;"></div>
<div style="left:294px;top:370px;width:1582px;height:1px;background:#485060;"></div>
<span class="t" id="t35" style="left:347.70px;top:310.00px;font-size:13px;line-height:15px;font-weight:400;color:#ffffff;-webkit-text-stroke:0.6px #ffffff;transform:scaleX(1.0378);">No.</span>
<svg style="left:374px;top:310.3px;overflow:visible;" width="12.5" height="13" viewBox="0 0 12.5 13"><path fill="none" stroke="#ffffff" stroke-width="1.45" stroke-linecap="round" stroke-linejoin="round" d="M3 12.2 V1.2 M0.4 3.6 L3 0.9 L5.6 3.6 M9.1 0.6 V11.6 M6.5 9.2 L9.1 11.9 L11.7 9.2"/></svg>
<span class="t" id="t36" style="left:403.70px;top:310.00px;font-size:13px;line-height:15px;font-weight:400;color:#ffffff;-webkit-text-stroke:0.6px #ffffff;transform:scaleX(1.0200);">Logo</span>
<span class="t" id="t37" style="left:450.20px;top:310.00px;font-size:13px;line-height:15px;font-weight:400;color:#ffffff;-webkit-text-stroke:0.6px #ffffff;transform:scaleX(0.9946);">Name</span>
<svg style="left:490px;top:310.3px;overflow:visible;" width="12.5" height="13" viewBox="0 0 12.5 13"><path fill="none" stroke="#ffffff" stroke-width="1.45" stroke-linecap="round" stroke-linejoin="round" d="M3 12.2 V1.2 M0.4 3.6 L3 0.9 L5.6 3.6 M9.1 0.6 V11.6 M6.5 9.2 L9.1 11.9 L11.7 9.2"/></svg>
<span class="t" id="t38" style="left:724.20px;top:310.00px;font-size:13px;line-height:15px;font-weight:400;color:#ffffff;-webkit-text-stroke:0.6px #ffffff;transform:scaleX(0.9128);">Season</span>
<svg style="left:769.75px;top:310.3px;overflow:visible;" width="12.5" height="13" viewBox="0 0 12.5 13"><path fill="none" stroke="#ffffff" stroke-width="1.45" stroke-linecap="round" stroke-linejoin="round" d="M3 12.2 V1.2 M0.4 3.6 L3 0.9 L5.6 3.6 M9.1 0.6 V11.6 M6.5 9.2 L9.1 11.9 L11.7 9.2"/></svg>
<span class="t" id="t39" style="left:799.70px;top:310.00px;font-size:13px;line-height:15px;font-weight:400;color:#ffffff;-webkit-text-stroke:0.6px #ffffff;transform:scaleX(0.9970);">Organisation</span>
<svg style="left:878.5px;top:310.3px;overflow:visible;" width="12.5" height="13" viewBox="0 0 12.5 13"><path fill="none" stroke="#ffffff" stroke-width="1.45" stroke-linecap="round" stroke-linejoin="round" d="M3 12.2 V1.2 M0.4 3.6 L3 0.9 L5.6 3.6 M9.1 0.6 V11.6 M6.5 9.2 L9.1 11.9 L11.7 9.2"/></svg>
<span class="t" id="t40" style="left:976.70px;top:310.00px;font-size:13px;line-height:15px;font-weight:400;color:#ffffff;-webkit-text-stroke:0.6px #ffffff;transform:scaleX(0.9919);">Team type</span>
<span class="t" id="t41" style="left:1053.45px;top:310.00px;font-size:13px;line-height:15px;font-weight:400;color:#ffffff;-webkit-text-stroke:0.6px #ffffff;transform:scaleX(0.9930);">Discipline</span>
<svg style="left:1114px;top:310.3px;overflow:visible;" width="12.5" height="13" viewBox="0 0 12.5 13"><path fill="none" stroke="#ffffff" stroke-width="1.45" stroke-linecap="round" stroke-linejoin="round" d="M3 12.2 V1.2 M0.4 3.6 L3 0.9 L5.6 3.6 M9.1 0.6 V11.6 M6.5 9.2 L9.1 11.9 L11.7 9.2"/></svg>
<span class="t" id="t42" style="left:1166.70px;top:310.00px;font-size:13px;line-height:15px;font-weight:400;color:#ffffff;-webkit-text-stroke:0.6px #ffffff;transform:scaleX(0.9683);">Gender</span>
<svg style="left:1214px;top:310.3px;overflow:visible;" width="12.5" height="13" viewBox="0 0 12.5 13"><path fill="none" stroke="#ffffff" stroke-width="1.45" stroke-linecap="round" stroke-linejoin="round" d="M3 12.2 V1.2 M0.4 3.6 L3 0.9 L5.6 3.6 M9.1 0.6 V11.6 M6.5 9.2 L9.1 11.9 L11.7 9.2"/></svg>
<span class="t" id="t43" style="left:1270.20px;top:310.00px;font-size:13px;line-height:15px;font-weight:400;color:#ffffff;-webkit-text-stroke:0.6px #ffffff;transform:scaleX(0.9920);">Age category</span>
<svg style="left:1351.5px;top:310.3px;overflow:visible;" width="12.5" height="13" viewBox="0 0 12.5 13"><path fill="none" stroke="#ffffff" stroke-width="1.45" stroke-linecap="round" stroke-linejoin="round" d="M3 12.2 V1.2 M0.4 3.6 L3 0.9 L5.6 3.6 M9.1 0.6 V11.6 M6.5 9.2 L9.1 11.9 L11.7 9.2"/></svg>
<span class="t" id="t44" style="left:1488.70px;top:310.00px;font-size:13px;line-height:15px;font-weight:400;color:#ffffff;-webkit-text-stroke:0.6px #ffffff;transform:scaleX(0.9624);">Clubs</span>
<svg style="left:1526px;top:310.3px;overflow:visible;" width="12.5" height="13" viewBox="0 0 12.5 13"><path fill="none" stroke="#ffffff" stroke-width="1.45" stroke-linecap="round" stroke-linejoin="round" d="M3 12.2 V1.2 M0.4 3.6 L3 0.9 L5.6 3.6 M9.1 0.6 V11.6 M6.5 9.2 L9.1 11.9 L11.7 9.2"/></svg>
<span class="t" id="t45" style="left:1665.45px;top:310.00px;font-size:13px;line-height:15px;font-weight:400;color:#ffffff;-webkit-text-stroke:0.6px #ffffff;transform:scaleX(0.9835);">Status</span>
<div style="left:450.5px;top:331px;width:255.0px;height:29px;background:#212739;border:1px solid #333b4d;border-radius:4px;"></div>
<div style="left:724.5px;top:331px;width:57.0px;height:29px;background:#212739;border:1px solid #333b4d;border-radius:4px;"></div>
<div style="left:800.5px;top:331px;width:157.75px;height:29px;background:#212739;border:1px solid #333b4d;border-radius:4px;"></div>
<div style="left:1053.5px;top:331px;width:95.25px;height:29px;background:#212739;border:1px solid #333b4d;border-radius:4px;"></div>
<svg style="left:1127.25px;top:342.5px;overflow:visible;" width="11.5" height="6.3" viewBox="0 0 12 6.6"><path fill="none" stroke="#b9c0cc" stroke-width="1.3" stroke-linecap="round" stroke-linejoin="round" d="M0.8 0.9 L6 5.7 L11.2 0.9"/></svg>
<div style="left:1167px;top:331px;width:84.5px;height:29px;background:#212739;border:1px solid #333b4d;border-radius:4px;"></div>
<svg style="left:1230.0px;top:342.5px;overflow:visible;" width="11.5" height="6.3" viewBox="0 0 12 6.6"><path fill="none" stroke="#b9c0cc" stroke-width="1.3" stroke-linecap="round" stroke-linejoin="round" d="M0.8 0.9 L6 5.7 L11.2 0.9"/></svg>
<div style="left:1270.5px;top:331px;width:200.0px;height:29px;background:#212739;border:1px solid #333b4d;border-radius:4px;"></div>
<svg style="left:1449.0px;top:342.5px;overflow:visible;" width="11.5" height="6.3" viewBox="0 0 12 6.6"><path fill="none" stroke="#b9c0cc" stroke-width="1.3" stroke-linecap="round" stroke-linejoin="round" d="M0.8 0.9 L6 5.7 L11.2 0.9"/></svg>
<div style="left:1489.5px;top:331px;width:158.0px;height:29px;background:#212739;border:1px solid #333b4d;border-radius:4px;"></div>
<div style="left:1666px;top:331px;width:84.75px;height:29px;background:#212739;border:1px solid #333b4d;border-radius:4px;"></div>
<svg style="left:1729.25px;top:342.5px;overflow:visible;" width="11.5" height="6.3" viewBox="0 0 12 6.6"><path fill="none" stroke="#b9c0cc" stroke-width="1.3" stroke-linecap="round" stroke-linejoin="round" d="M0.8 0.9 L6 5.7 L11.2 0.9"/></svg>
<div style="left:1835px;top:319px;width:28px;height:30px;background:#2196f3;border-radius:4px;"></div>
<svg style="left:1843.0px;top:328.0px;overflow:visible;" width="12" height="12" viewBox="0 0 12 12"><path fill="none" stroke="#ffffff" stroke-width="1.4" stroke-linecap="round" stroke-linejoin="round" d="M1.2 1.2 L10.8 10.8 M10.8 1.2 L1.2 10.8"/></svg>
<div style="left:294px;top:371px;width:1582px;height:50px;background:#242b3b;"></div>
<div style="left:294px;top:421px;width:1582px;height:1px;background:#2c3445;"></div>
<div style="left:320.75px;top:392px;width:9.5px;height:8px;background:#8d929c;"></div>
<div style="left:320.75px;top:392px;width:9.5px;height:2.2px;background:#fafafa;"></div>
<div style="left:320.75px;top:395px;width:9.5px;height:2.2px;background:#fafafa;"></div>
<div style="left:320.75px;top:398px;width:9.5px;height:2px;background:#fafafa;"></div>
<span class="t" id="t46" style="left:348.45px;top:389.00px;font-size:13px;line-height:15px;font-weight:400;color:#f4f5f8;">1</span>
<svg style="left:410.75px;top:389px;" width="15.5" height="10.8" viewBox="0 0 15.5 10.8"><rect width="15.5" height="10.8" rx="0.8" fill="#3d4350"/><path d="M1.2 9.6 L5 4.6 L7.6 7.6 L10.6 3.4 L14.3 9.6 Z" fill="#565c69"/><circle cx="4.2" cy="3" r="1.2" fill="#565c69"/></svg>
<span class="t" id="t47" style="left:450.20px;top:381.00px;font-size:13px;line-height:15px;font-weight:400;color:#f4f5f8;transform:scaleX(0.8868);">1.NL &quot;SREDIŠTA SPLIT Mlađi pioniri-Pioniri</span>
<span class="t" id="t48" style="left:450.20px;top:397.00px;font-size:13px;line-height:15px;font-weight:400;color:#f4f5f8;transform:scaleX(0.9678);">21/22</span>
<span class="t" id="t49" style="left:724.20px;top:389.00px;font-size:13px;line-height:15px;font-weight:400;color:#f4f5f8;transform:scaleX(0.9275);">2021/2022</span>
<span class="t" id="t50" style="left:799.70px;top:389.00px;font-size:13px;line-height:15px;font-weight:400;color:#f4f5f8;transform:scaleX(0.9015);">HNS</span>
<span class="t" id="t51" style="left:976.70px;top:389.00px;font-size:13px;line-height:15px;font-weight:400;color:#f4f5f8;transform:scaleX(0.9241);">Club team</span>
<span class="t" id="t52" style="left:1053.45px;top:389.00px;font-size:13px;line-height:15px;font-weight:400;color:#f4f5f8;transform:scaleX(0.9405);">Football</span>
<span class="t" id="t53" style="left:1167.20px;top:389.00px;font-size:13px;line-height:15px;font-weight:400;color:#f4f5f8;transform:scaleX(0.9401);">Male</span>
<span class="t" id="t54" style="left:1270.20px;top:389.00px;font-size:13px;line-height:15px;font-weight:400;color:#f4f5f8;transform:scaleX(0.8867);">Pioneers</span>
<span class="t" id="t55" style="left:1489.20px;top:389.00px;font-size:13px;line-height:15px;font-weight:400;color:#f4f5f8;transform:scaleX(0.9330);">16</span>
<div style="left:1665.75px;top:388px;width:47.25px;height:18px;background:#c8e6c9;border-radius:3px;"></div>
<span class="t" id="t56" style="left:1671.70px;top:392.00px;font-size:10.2px;line-height:11px;font-weight:700;color:#256029;transform:scaleX(0.9636);">ACTIVE</span>
<div style="left:1804px;top:381px;width:28px;height:30px;background:#2196f3;border-radius:4px;"></div>
<svg style="left:1812.0px;top:390.0px;overflow:visible;" width="12" height="12" viewBox="0 0 12 12"><path fill="none" stroke="#ffffff" stroke-width="1.4" stroke-linecap="round" stroke-linejoin="round" d="M6 0.8 V11 M1.8 7 L6 11.1 L10.2 7"/></svg>
<div style="left:1835px;top:381px;width:28px;height:30px;background:#2196f3;border-radius:4px;"></div>
<svg style="left:1843.0px;top:390.0px;overflow:visible;" width="12" height="12" viewBox="0 0 12 12"><path fill="none" stroke="#ffffff" stroke-width="1.4" stroke-linecap="round" stroke-linejoin="round" d="M1.2 1.2 L10.8 10.8 M10.8 1.2 L1.2 10.8"/></svg>
<div style="left:294px;top:465px;width:1582px;height:1px;background:#2c3445;"></div>
<div style="left:320.75px;top:440px;width:9.5px;height:8px;background:#8d929c;"></div>
<div style="left:320.75px;top:440px;width:9.5px;height:2.2px;background:#fafafa;"></div>
<div style="left:320.75px;top:443px;width:9.5px;height:2.2px;background:#fafafa;"></div>
<div style="left:320.75px;top:446px;width:9.5px;height:2px;background:#fafafa;"></div>
<span class="t" id="t57" style="left:348.45px;top:437.00px;font-size:13px;line-height:15px;font-weight:400;color:#f4f5f8;">2</span>
<svg style="left:410.75px;top:436px;" width="15.5" height="10.8" viewBox="0 0 15.5 10.8"><rect width="15.5" height="10.8" rx="0.8" fill="#3d4350"/><path d="M1.2 9.6 L5 4.6 L7.6 7.6 L10.6 3.4 L14.3 9.6 Z" fill="#565c69"/><circle cx="4.2" cy="3" r="1.2" fill="#565c69"/></svg>
<span class="t" id="t58" style="left:450.20px;top:437.00px;font-size:13px;line-height:15px;font-weight:400;color:#f4f5f8;transform:scaleX(0.9266);">1. liga U-11 2021/2022 21/22</span>
<span class="t" id="t59" style="left:724.20px;top:437.00px;font-size:13px;line-height:15px;font-weight:400;color:#f4f5f8;transform:scaleX(0.9275);">2021/2022</span>
<span class="t" id="t60" style="left:799.70px;top:437.00px;font-size:13px;line-height:15px;font-weight:400;color:#f4f5f8;transform:scaleX(0.9239);">ŽNS splitsko-dalmatinski</span>
<span class="t" id="t61" style="left:976.70px;top:437.00px;font-size:13px;line-height:15px;font-weight:400;color:#f4f5f8;transform:scaleX(0.9241);">Club team</span>
<span class="t" id="t62" style="left:1053.45px;top:437.00px;font-size:13px;line-height:15px;font-weight:400;color:#f4f5f8;transform:scaleX(0.9405);">Football</span>
<span class="t" id="t63" style="left:1167.20px;top:437.00px;font-size:13px;line-height:15px;font-weight:400;color:#f4f5f8;transform:scaleX(0.9401);">Male</span>
<span class="t" id="t64" style="left:1270.20px;top:437.00px;font-size:13px;line-height:15px;font-weight:400;color:#f4f5f8;transform:scaleX(0.9053);">Beginners</span>
<span class="t" id="t65" style="left:1489.20px;top:437.00px;font-size:13px;line-height:15px;font-weight:400;color:#f4f5f8;transform:scaleX(0.9330);">12</span>
<div style="left:1665.75px;top:436px;width:47.25px;height:18px;background:#c8e6c9;border-radius:3px;"></div>
<span class="t" id="t66" style="left:1671.70px;top:440.00px;font-size:10.2px;line-height:11px;font-weight:700;color:#256029;transform:scaleX(0.9636);">ACTIVE</span>
<div style="left:1773px;top:429px;width:28.75px;height:30px;background:#2196f3;border-radius:4px;"></div>
<svg style="left:1781.375px;top:438.0px;overflow:visible;" width="12" height="12" viewBox="0 0 12 12"><path fill="none" stroke="#ffffff" stroke-width="1.4" stroke-linecap="round" stroke-linejoin="round" d="M6 11.2 V1 M1.8 5 L6 0.9 L10.2 5"/></svg>
<div style="left:1804px;top:429px;width:28px;height:30px;background:#2196f3;border-radius:4px;"></div>
<svg style="left:1812.0px;top:438.0px;overflow:visible;" width="12" height="12" viewBox="0 0 12 12"><path fill="none" stroke="#ffffff" stroke-width="1.4" stroke-linecap="round" stroke-linejoin="round" d="M6 0.8 V11 M1.8 7 L6 11.1 L10.2 7"/></svg>
<div style="left:1835px;top:429px;width:28px;height:30px;background:#2196f3;border-radius:4px;"></div>
<svg style="left:1843.0px;top:438.0px;overflow:visible;" width="12" height="12" viewBox="0 0 12 12"><path fill="none" stroke="#ffffff" stroke-width="1.4" stroke-linecap="round" stroke-linejoin="round" d="M1.2 1.2 L10.8 10.8 M10.8 1.2 L1.2 10.8"/></svg>
<div style="left:294px;top:508px;width:1582px;height:1px;background:#2c3445;"></div>
<div style="left:320.75px;top:483px;width:9.5px;height:8px;background:#8d929c;"></div>
<div style="left:320.75px;top:483px;width:9.5px;height:2.2px;background:#fafafa;"></div>
<div style="left:320.75px;top:486px;width:9.5px;height:2.2px;background:#fafafa;"></div>
<div style="left:320.75px;top:489px;width:9.5px;height:2px;background:#fafafa;"></div>
<span class="t" id="t67" style="left:348.45px;top:480.00px;font-size:13px;line-height:15px;font-weight:400;color:#f4f5f8;">3</span>
<span class="t" id="t68" style="left:450.20px;top:480.00px;font-size:13px;line-height:15px;font-weight:400;color:#f4f5f8;transform:scaleX(0.9110);">Hrvatski Telekom Prva liga 20/21</span>
<span class="t" id="t69" style="left:724.20px;top:480.00px;font-size:13px;line-height:15px;font-weight:400;color:#f4f5f8;transform:scaleX(0.9275);">2020/2021</span>
<span class="t" id="t70" style="left:799.70px;top:480.00px;font-size:13px;line-height:15px;font-weight:400;color:#f4f5f8;transform:scaleX(0.9015);">HNS</span>
<span class="t" id="t71" style="left:976.70px;top:480.00px;font-size:13px;line-height:15px;font-weight:400;color:#f4f5f8;transform:scaleX(0.9241);">Club team</span>
<span class="t" id="t72" style="left:1053.45px;top:480.00px;font-size:13px;line-height:15px;font-weight:400;color:#f4f5f8;transform:scaleX(0.9405);">Football</span>
<span class="t" id="t73" style="left:1167.20px;top:480.00px;font-size:13px;line-height:15px;font-weight:400;color:#f4f5f8;transform:scaleX(0.9401);">Male</span>
<span class="t" id="t74" style="left:1270.20px;top:480.00px;font-size:13px;line-height:15px;font-weight:400;color:#f4f5f8;transform:scaleX(0.8905);">Seniors</span>
<span class="t" id="t75" style="left:1489.20px;top:480.00px;font-size:13px;line-height:15px;font-weight:400;color:#f4f5f8;transform:scaleX(0.9330);">10</span>
<div style="left:1665.75px;top:479px;width:47.25px;height:18px;background:#c8e6c9;border-radius:3px;"></div>
<span class="t" id="t76" style="left:1671.70px;top:483.00px;font-size:10.2px;line-height:11px;font-weight:700;color:#256029;transform:scaleX(0.9636);">ACTIVE</span>
<div style="left:1773px;top:472px;width:28.75px;height:30px;background:#2196f3;border-radius:4px;"></div>
<svg style="left:1781.375px;top:481.0px;overflow:visible;" width="12" height="12" viewBox="0 0 12 12"><path fill="none" stroke="#ffffff" stroke-width="1.4" stroke-linecap="round" stroke-linejoin="round" d="M6 11.2 V1 M1.8 5 L6 0.9 L10.2 5"/></svg>
<div style="left:1804px;top:472px;width:28px;height:30px;background:#2196f3;border-radius:4px;"></div>
<svg style="left:1812.0px;top:481.0px;overflow:visible;" width="12" height="12" viewBox="0 0 12 12"><path fill="none" stroke="#ffffff" stroke-width="1.4" stroke-linecap="round" stroke-linejoin="round" d="M6 0.8 V11 M1.8 7 L6 11.1 L10.2 7"/></svg>
<div style="left:1835px;top:472px;width:28px;height:30px;background:#2196f3;border-radius:4px;"></div>
<svg style="left:1843.0px;top:481.0px;overflow:visible;" width="12" height="12" viewBox="0 0 12 12"><path fill="none" stroke="#ffffff" stroke-width="1.4" stroke-linecap="round" stroke-linejoin="round" d="M1.2 1.2 L10.8 10.8 M10.8 1.2 L1.2 10.8"/></svg>
<div style="left:294px;top:551px;width:1582px;height:1px;background:#2c3445;"></div>
<div style="left:320.75px;top:526px;width:9.5px;height:8px;background:#8d929c;"></div>
<div style="left:320.75px;top:526px;width:9.5px;height:2.2px;background:#fafafa;"></div>
<div style="left:320.75px;top:529px;width:9.5px;height:2.2px;background:#fafafa;"></div>
<div style="left:320.75px;top:532px;width:9.5px;height:2px;background:#fafafa;"></div>
<span class="t" id="t77" style="left:348.45px;top:523.00px;font-size:13px;line-height:15px;font-weight:400;color:#f4f5f8;">4</span>
<span class="t" id="t78" style="left:450.20px;top:523.00px;font-size:13px;line-height:15px;font-weight:400;color:#f4f5f8;transform:scaleX(0.9390);">Hrvatski nogometni kup 20/21</span>
<span class="t" id="t79" style="left:724.20px;top:523.00px;font-size:13px;line-height:15px;font-weight:400;color:#f4f5f8;transform:scaleX(0.9275);">2020/2021</span>
<span class="t" id="t80" style="left:799.70px;top:523.00px;font-size:13px;line-height:15px;font-weight:400;color:#f4f5f8;transform:scaleX(0.9015);">HNS</span>
<span class="t" id="t81" style="left:976.70px;top:523.00px;font-size:13px;line-height:15px;font-weight:400;color:#f4f5f8;transform:scaleX(0.9241);">Club team</span>
<span class="t" id="t82" style="left:1053.45px;top:523.00px;font-size:13px;line-height:15px;font-weight:400;color:#f4f5f8;transform:scaleX(0.9405);">Football</span>
<span class="t" id="t83" style="left:1167.20px;top:523.00px;font-size:13px;line-height:15px;font-weight:400;color:#f4f5f8;transform:scaleX(0.9401);">Male</span>
<span class="t" id="t84" style="left:1270.20px;top:523.00px;font-size:13px;line-height:15px;font-weight:400;color:#f4f5f8;transform:scaleX(0.8905);">Seniors</span>
<span class="t" id="t85" style="left:1489.20px;top:523.00px;font-size:13px;line-height:15px;font-weight:400;color:#f4f5f8;transform:scaleX(0.9330);">48</span>
<div style="left:1665.75px;top:522px;width:47.25px;height:18px;background:#c8e6c9;border-radius:3px;"></div>
<span class="t" id="t86" style="left:1671.70px;top:526.00px;font-size:10.2px;line-height:11px;font-weight:700;color:#256029;transform:scaleX(0.9636);">ACTIVE</span>
<div style="left:1773px;top:515px;width:28.75px;height:30px;background:#2196f3;border-radius:4px;"></div>
<svg style="left:1781.375px;top:524.0px;overflow:visible;" width="12" height="12" viewBox="0 0 12 12"><path fill="none" stroke="#ffffff" stroke-width="1.4" stroke-linecap="round" stroke-linejoin="round" d="M6 11.2 V1 M1.8 5 L6 0.9 L10.2 5"/></svg>
<div style="left:1804px;top:515px;width:28px;height:30px;background:#2196f3;border-radius:4px;"></div>
<svg style="left:1812.0px;top:524.0px;overflow:visible;" width="12" height="12" viewBox="0 0 12 12"><path fill="none" stroke="#ffffff" stroke-width="1.4" stroke-linecap="round" stroke-linejoin="round" d="M6 0.8 V11 M1.8 7 L6 11.1 L10.2 7"/></svg>
<div style="left:1835px;top:515px;width:28px;height:30px;background:#2196f3;border-radius:4px;"></div>
<svg style="left:1843.0px;top:524.0px;overflow:visible;" width="12" height="12" viewBox="0 0 12 12"><path fill="none" stroke="#ffffff" stroke-width="1.4" stroke-linecap="round" stroke-linejoin="round" d="M1.2 1.2 L10.8 10.8 M10.8 1.2 L1.2 10.8"/></svg>
<div style="left:320.75px;top:570px;width:9.5px;height:8px;background:#8d929c;"></div>
<div style="left:320.75px;top:570px;width:9.5px;height:2.2px;background:#fafafa;"></div>
<div style="left:320.75px;top:573px;width:9.5px;height:2.2px;background:#fafafa;"></div>
<div style="left:320.75px;top:576px;width:9.5px;height:2px;background:#fafafa;"></div>
<span class="t" id="t87" style="left:348.45px;top:567.00px;font-size:13px;line-height:15px;font-weight:400;color:#f4f5f8;">5</span>
<svg style="left:410.75px;top:565.75px;" width="15.5" height="10.8" viewBox="0 0 15.5 10.8"><rect width="15.5" height="10.8" rx="0.8" fill="#3d4350"/><path d="M1.2 9.6 L5 4.6 L7.6 7.6 L10.6 3.4 L14.3 9.6 Z" fill="#565c69"/><circle cx="4.2" cy="3" r="1.2" fill="#565c69"/></svg>
<span class="t" id="t88" style="left:450.20px;top:567.00px;font-size:13px;line-height:15px;font-weight:400;color:#f4f5f8;transform:scaleX(0.8745);">2.NL &quot;SREDIŠTA SPLIT Kadeti-Juniori 21/22</span>
<span class="t" id="t89" style="left:724.20px;top:567.00px;font-size:13px;line-height:15px;font-weight:400;color:#f4f5f8;transform:scaleX(0.9275);">2021/2022</span>
<span class="t" id="t90" style="left:799.70px;top:567.00px;font-size:13px;line-height:15px;font-weight:400;color:#f4f5f8;transform:scaleX(0.9015);">HNS</span>
<span class="t" id="t91" style="left:976.70px;top:567.00px;font-size:13px;line-height:15px;font-weight:400;color:#f4f5f8;transform:scaleX(0.9241);">Club team</span>
<span class="t" id="t92" style="left:1053.45px;top:567.00px;font-size:13px;line-height:15px;font-weight:400;color:#f4f5f8;transform:scaleX(0.9405);">Football</span>
<span class="t" id="t93" style="left:1167.20px;top:567.00px;font-size:13px;line-height:15px;font-weight:400;color:#f4f5f8;transform:scaleX(0.9401);">Male</span>
<span class="t" id="t94" style="left:1270.20px;top:567.00px;font-size:13px;line-height:15px;font-weight:400;color:#f4f5f8;transform:scaleX(0.8859);">Cadets</span>
<span class="t" id="t95" style="left:1489.20px;top:567.00px;font-size:13px;line-height:15px;font-weight:400;color:#f4f5f8;transform:scaleX(0.9330);">10</span>
<div style="left:1665.75px;top:566px;width:47.25px;height:18px;background:#c8e6c9;border-radius:3px;"></div>
<span class="t" id="t96" style="left:1671.70px;top:570.00px;font-size:10.2px;line-height:11px;font-weight:700;color:#256029;transform:scaleX(0.9636);">ACTIVE</span>
<div style="left:1804px;top:559px;width:28px;height:30px;background:#2196f3;border-radius:4px;"></div>
<svg style="left:1812.0px;top:568.0px;overflow:visible;" width="12" height="12" viewBox="0 0 12 12"><path fill="none" stroke="#ffffff" stroke-width="1.4" stroke-linecap="round" stroke-linejoin="round" d="M6 11.2 V1 M1.8 5 L6 0.9 L10.2 5"/></svg>
<div style="left:1835px;top:559px;width:28px;height:30px;background:#2196f3;border-radius:4px;"></div>
<svg style="left:1843.0px;top:568.0px;overflow:visible;" width="12" height="12" viewBox="0 0 12 12"><path fill="none" stroke="#ffffff" stroke-width="1.4" stroke-linecap="round" stroke-linejoin="round" d="M1.2 1.2 L10.8 10.8 M10.8 1.2 L1.2 10.8"/></svg>
<div style="left:294px;top:596px;width:1582px;height:2px;background:#4a5262;"></div>
<span class="t" id="t97" style="left:1497.70px;top:618.00px;font-size:12px;line-height:14px;font-weight:400;color:#9aa4b6;transform:scaleX(0.8994);">Items per page:</span>
<div style="left:1578px;top:610px;width:46px;height:28.75px;background:#20263a;border:1px solid #3a4254;border-radius:4px;"></div>
<span class="t" id="t98" style="left:1585.20px;top:618.00px;font-size:12px;line-height:14px;font-weight:400;color:#ffffff;transform:scaleX(0.9357);">10</span>
<svg style="left:1602.5px;top:621.5px;overflow:visible;" width="11.5" height="6.3" viewBox="0 0 12 6.6"><path fill="none" stroke="#e0e3ea" stroke-width="1.3" stroke-linecap="round" stroke-linejoin="round" d="M0.8 0.9 L6 5.7 L11.2 0.9"/></svg>
<span class="t" id="t99" style="left:1642.20px;top:618.00px;font-size:12px;line-height:14px;font-weight:400;color:#9aa4b6;transform:scaleX(0.9007);">1 - 5 of 5 results</span>
<svg style="left:1740.75px;top:620px;overflow:visible;" width="9" height="6.4" viewBox="0 0 9 6.4"><path fill="none" stroke="#9aa4b6" stroke-width="1.2" stroke-linecap="round" stroke-linejoin="round" d="M3.6 0.6 L0.8 3.2 L3.6 5.8"/><path fill="none" stroke="#9aa4b6" stroke-width="1.2" stroke-linecap="round" stroke-linejoin="round" d="M3.6 0.6 L0.8 3.2 L3.6 5.8" transform="translate(4.2,0)"/></svg>
<svg style="left:1769.5px;top:619px;overflow:visible;" width="5.4" height="8.4" viewBox="0 0 5.4 8.4"><path fill="none" stroke="#9aa4b6" stroke-width="1.3" stroke-linecap="round" stroke-linejoin="round" d="M4.4 0.7 L0.9 4.2 L4.4 7.7"/></svg>
<div style="left:1788px;top:612px;width:25px;height:25px;background:#2196f3;border-radius:4px;"></div>
<span class="t" id="t100" style="left:1797.40px;top:618.00px;font-size:12px;line-height:14px;font-weight:400;color:#ffffff;">1</span>
<svg style="left:1827px;top:619px;overflow:visible;" width="5.4" height="8.4" viewBox="0 0 5.4 8.4"><path fill="none" stroke="#9aa4b6" stroke-width="1.3" stroke-linecap="round" stroke-linejoin="round" d="M0.9 0.7 L4.4 4.2 L0.9 7.7"/></svg>
<svg style="left:1852px;top:620px;overflow:visible;" width="9" height="6.4" viewBox="0 0 9 6.4"><path fill="none" stroke="#9aa4b6" stroke-width="1.2" stroke-linecap="round" stroke-linejoin="round" d="M0.8 0.6 L3.6 3.2 L0.8 5.8"/><path fill="none" stroke="#9aa4b6" stroke-width="1.2" stroke-linecap="round" stroke-linejoin="round" d="M0.8 0.6 L3.6 3.2 L0.8 5.8" transform="translate(4.2,0)"/></svg>
<div style="left:294px;top:657px;width:1582px;height:1px;background:#3a4152;"></div>
<div style="left:294px;top:679px;width:73px;height:30px;background:#2196f3;border-radius:4px;"></div>
<svg style="left:304px;top:688px;overflow:visible;" width="12" height="12" viewBox="0 0 12 12"><path fill="none" stroke="#fff" stroke-width="1.5" stroke-linecap="round" stroke-linejoin="round" d="M6 0.7 V11.3 M0.7 6 H11.3"/></svg>
<span class="t" id="t101" style="left:325.20px;top:687.00px;font-size:13px;line-height:15px;font-weight:400;color:#ffffff;-webkit-text-stroke:0.6px #ffffff;transform:scaleX(0.9723);">Add</span>
</body></html>
